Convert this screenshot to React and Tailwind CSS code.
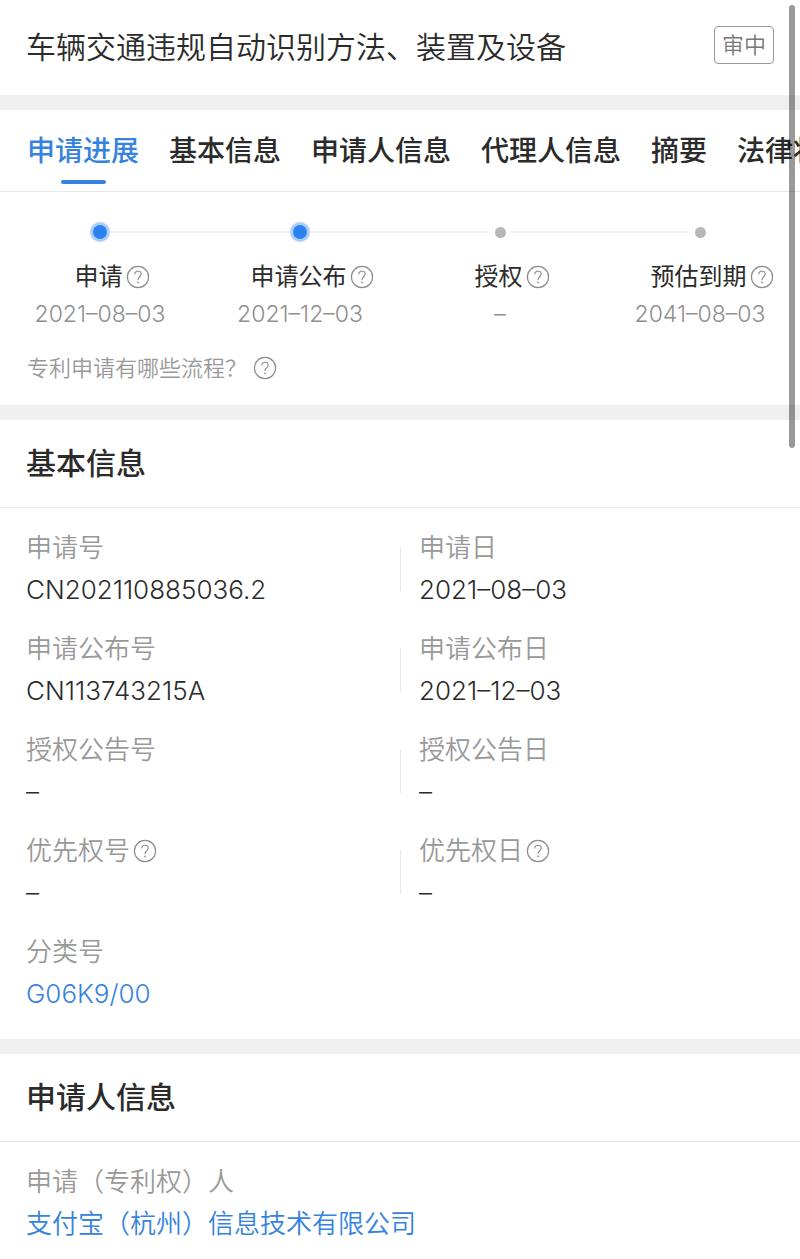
import { useState } from "react";

const tabs = ["申请进展", "基本信息", "申请人信息", "代理人信息", "摘要", "法律状态"];

const steps = [
  { label: "申请", date: "2021–08–03", done: true },
  { label: "申请公布", date: "2021–12–03", done: true },
  { label: "授权", date: "–", done: false },
  { label: "预估到期", date: "2041–08–03", done: false },
];

const rows = [
  [
    { label: "申请号", value: "CN202110885036.2" },
    { label: "申请日", value: "2021–08–03" },
  ],
  [
    { label: "申请公布号", value: "CN113743215A" },
    { label: "申请公布日", value: "2021–12–03" },
  ],
  [
    { label: "授权公告号", value: "–" },
    { label: "授权公告日", value: "–" },
  ],
  [
    { label: "优先权号", value: "–", help: true },
    { label: "优先权日", value: "–", help: true },
  ],
];

const HelpButton = ({ label }) => (
  <button type="button" aria-label={label} className="shrink-0 text-[#8c8c8c]">
    <svg viewBox="0 0 24 24" fill="none" stroke="currentColor" className="block w-6 h-6">
      <circle cx="12" cy="12" r="10.6" strokeWidth="1.2" />
      <path
        d="M8.8 9.4C8.8 7.5 10.2 6.2 12 6.2s3.2 1.2 3.2 2.9c0 1.3-.7 2-1.7 2.9-1 .8-1.5 1.5-1.5 2.9"
        strokeWidth="1.1"
      />
      <circle cx="12" cy="17.3" r="0.9" fill="currentColor" stroke="none" />
    </svg>
  </button>
);

const Step = ({ step, first }) => (
  <li className="relative flex-1 flex flex-col items-center">
    {!first && (
      <span className="absolute top-[9px] right-1/2 w-full px-[10px]">
        <span className="block h-[2px] bg-[#f2f2f4]" />
      </span>
    )}
    <span className="relative flex items-center justify-center w-5 h-5">
      {step.done ? (
        <span className="w-5 h-5 rounded-full border-[3px] border-[#a9cff6] bg-[#2f80f0]" />
      ) : (
        <span className="w-[11px] h-[11px] rounded-full bg-[#b8b8b8]" />
      )}
    </span>
    <div className="flex items-center gap-[3px] pl-6 mt-[17px] text-2xl leading-9 whitespace-nowrap">
      {step.label}
      <HelpButton label={step.label} />
    </div>
    <span className="mt-px text-[23px] leading-9 font-light text-[#8f8f8f]">{step.date}</span>
  </li>
);

const Field = ({ label, value, help, children }) => (
  <div>
    <dt className="flex items-center gap-[3px] text-[26px] leading-10 text-[#999] font-[350]">
      {label}
      {help && <HelpButton label={label} />}
    </dt>
    <dd className="mt-[2px] text-[26px] leading-10 font-[350]">{children || value}</dd>
  </div>
);

const SectionTitle = ({ children }) => (
  <h2 className="px-[26px] py-[21px] text-[30px] leading-[45px] font-medium border-b border-[#e8e8e8]">
    {children}
  </h2>
);

export default function App() {
  const [active, setActive] = useState(0);

  return (
    <div className="relative min-h-screen overflow-hidden bg-[#f0f0f0] text-[#2b2b2b] font-[Inter,'Noto_Sans_CJK_SC',sans-serif]">
      <header className="flex items-center justify-between px-[26px] h-[95px] bg-white">
        <h1 className="text-[30px] leading-[45px] font-[350]">车辆交通违规自动识别方法、装置及设备</h1>
        <span className="mb-[6px] px-[7px] text-[22px] leading-9 font-[350] text-[#777] border border-[#999] rounded">
          审中
        </span>
      </header>

      <section className="mt-[15px] bg-white">
        <nav className="flex gap-[30px] pl-[27px] overflow-hidden border-b border-[#e8e8e8]">
          {tabs.map((tab, index) => (
            <button
              key={tab}
              type="button"
              onClick={() => setActive(index)}
              className={`shrink-0 flex flex-col items-center pt-5 pb-[7px] text-[28px] leading-[42px] font-medium ${
                active === index ? "text-[#3583df]" : ""
              }`}
            >
              {tab}
              <span
                className={`mt-2 w-[45px] h-1 rounded-full ${
                  active === index ? "bg-[#3583df]" : "bg-transparent"
                }`}
              />
            </button>
          ))}
        </nav>

        <ol className="flex pt-[30px]">
          {steps.map((step, index) => (
            <Step key={step.label} step={step} first={index === 0} />
          ))}
        </ol>
        <div className="flex items-center gap-[6px] px-[27px] pt-[18px] pb-[19px] text-[22px] leading-9 font-[350] text-[#999]">
          专利申请有哪些流程？
          <HelpButton label="专利申请流程" />
        </div>
      </section>

      <section className="mt-[15px] bg-white">
        <SectionTitle>基本信息</SectionTitle>
        <dl className="flex flex-col gap-[19px] pt-5 pb-[25px]">
          {rows.map(([left, right]) => (
            <div key={left.label} className="grid grid-cols-2">
              <div className="pl-[26px]">
                <Field {...left} />
              </div>
              <div className="flex items-center gap-[18px]">
                <span className="w-px h-11 bg-[#e8e8e8]" />
                <Field {...right} />
              </div>
            </div>
          ))}
          <div className="px-[26px]">
            <Field label="分类号">
              <a href="#ipc" className="text-[#3583df]">
                G06K9/00
              </a>
            </Field>
          </div>
        </dl>
      </section>

      <section className="mt-[15px] bg-white">
        <SectionTitle>申请人信息</SectionTitle>
        <dl className="px-[26px] pt-5 pb-5">
          <Field label="申请（专利权）人">
            <a href="#applicant" className="text-[#3583df]">
              支付宝（杭州）信息技术有限公司
            </a>
          </Field>
        </dl>
      </section>

      <div className="absolute top-[5px] right-[5px] w-[6px] h-[443px] rounded-full bg-black/40" />
    </div>
  );
}
